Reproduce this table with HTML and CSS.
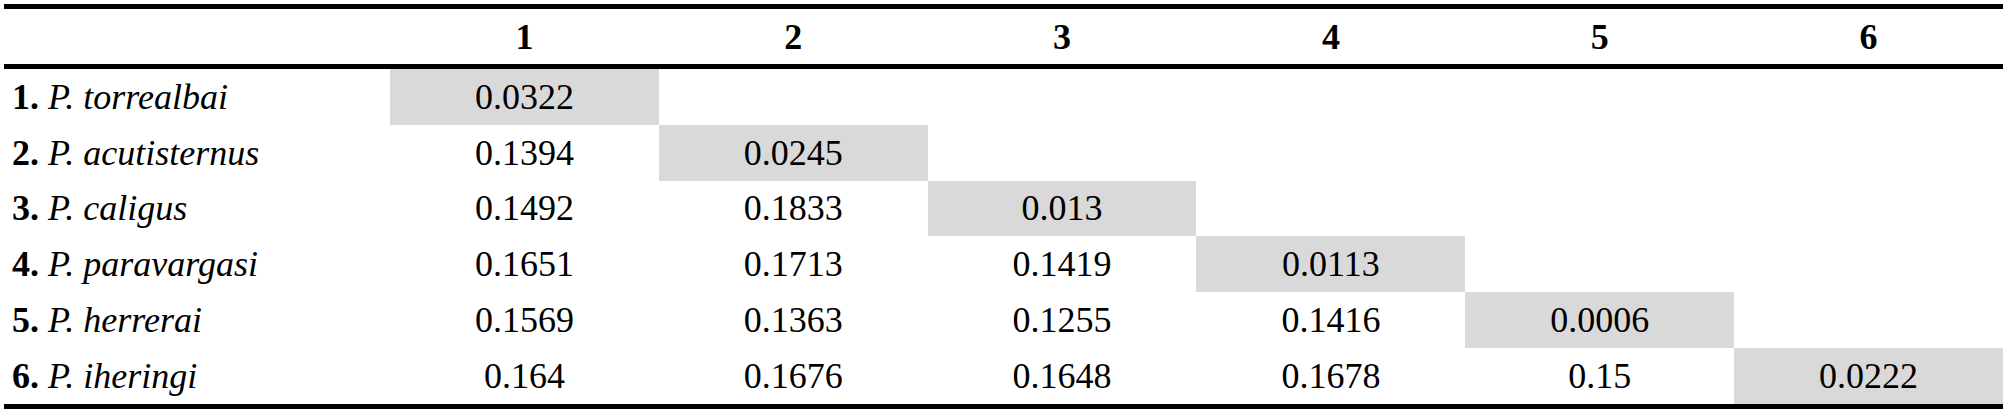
FILE: index.html
```html
<!DOCTYPE html>
<html lang="en">
<head>
  <meta charset="UTF-8">
  <title>Genetic distances</title>
  <link rel="stylesheet" href="styles.css">
</head>
<body>
  <table class="dist">
    <colgroup>
      <col class="name-col">
      <col><col><col><col><col><col>
    </colgroup>
    <thead>
      <tr>
        <th></th>
        <th>1</th><th>2</th><th>3</th><th>4</th><th>5</th><th>6</th>
      </tr>
    </thead>
    <tbody>
      <tr>
        <td class="name"><b>1.</b> <i>P. torrealbai</i></td>
        <td class="diag">0.0322</td><td></td><td></td><td></td><td></td><td></td>
      </tr>
      <tr>
        <td class="name"><b>2.</b> <i>P. acutisternus</i></td>
        <td>0.1394</td><td class="diag">0.0245</td><td></td><td></td><td></td><td></td>
      </tr>
      <tr>
        <td class="name"><b>3.</b> <i>P. caligus</i></td>
        <td>0.1492</td><td>0.1833</td><td class="diag">0.013</td><td></td><td></td><td></td>
      </tr>
      <tr>
        <td class="name"><b>4.</b> <i>P. paravargasi</i></td>
        <td>0.1651</td><td>0.1713</td><td>0.1419</td><td class="diag">0.0113</td><td></td><td></td>
      </tr>
      <tr>
        <td class="name"><b>5.</b> <i>P. herrerai</i></td>
        <td>0.1569</td><td>0.1363</td><td>0.1255</td><td>0.1416</td><td class="diag">0.0006</td><td></td>
      </tr>
      <tr>
        <td class="name"><b>6.</b> <i>P. iheringi</i></td>
        <td>0.164</td><td>0.1676</td><td>0.1648</td><td>0.1678</td><td>0.15</td><td class="diag">0.0222</td>
      </tr>
    </tbody>
  </table>
</body>
</html>
```

FILE: styles.css
```css
body {
  margin: 4px;
  background: #fff;
  color: #000;
  font-family: "Liberation Serif", "Times New Roman", serif;
}

.dist {
  width: 100%;
  table-layout: fixed;
  border-collapse: separate;
  border-spacing: 0;
  border-top: 5px solid #000;
  border-bottom: 5px solid #000;
  font-size: 36px;
}

.name-col {
  width: 386px;
}

.dist th,
.dist td {
  padding: 0;
  text-align: center;
  vertical-align: middle;
  white-space: nowrap;
  line-height: 1;
}

.dist th {
  height: 55px;
  font-weight: bold;
  border-bottom: 5px solid #000;
}

.dist td {
  height: 55.8px;
  font-weight: normal;
}

.dist td.name {
  text-align: left;
  padding-left: 8px;
}

.dist td.diag {
  background-color: #d9d9d9;
}
```
